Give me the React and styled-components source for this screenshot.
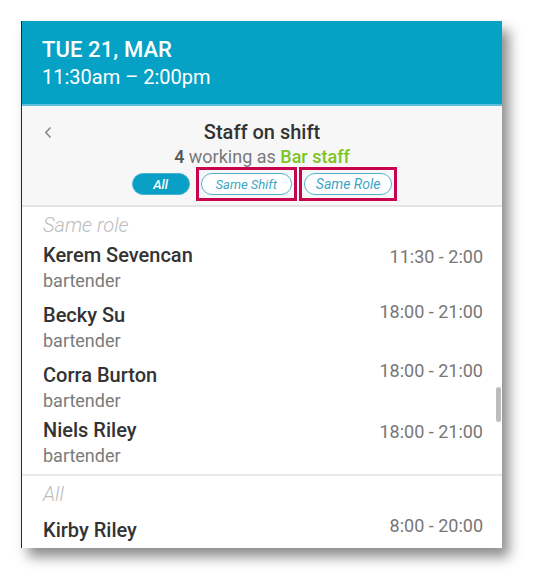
import React from "react";
import styled, { createGlobalStyle } from "styled-components";

const GlobalStyle = createGlobalStyle`
  html, body {
    margin: 0;
    padding: 0;
    background: #ffffff;
    font-family: Roboto, "Liberation Sans", Arial, sans-serif;
  }
`;

const Page = styled.div`
  width: 543px;
  height: 585px;
  padding: 21px 0 0 21px;
  box-sizing: border-box;
  overflow: hidden;
`;

const Card = styled.div`
  position: relative;
  width: 480px;
  height: 527px;
  display: flex;
  flex-direction: column;
  background: #ffffff;
  border-left: 1px solid #2a2a2a;
  box-shadow: 7px 9px 12px rgba(0, 0, 0, 0.45);
  overflow: hidden;
`;

const Header = styled.div`
  flex-shrink: 0;
  height: 85px;
  box-sizing: border-box;
  padding: 16px 0 0 20px;
  background: #05a2c6;
  border-bottom: 2px solid #5cc0da;
  color: #ffffff;
`;

const DateLine = styled.div`
  font-size: 22px;
  line-height: 26px;
  font-weight: 500;
  letter-spacing: 0.1px;
`;

const TimeLine = styled.div`
  font-size: 20px;
  line-height: 24px;
  margin-top: 2px;
`;

const SubHeader = styled.div`
  flex-shrink: 0;
  display: grid;
  grid-template-columns: 40px 1fr 40px;
  padding: 15px 0 4px;
  background: #f7f7f7;
  border-bottom: 2px solid #e4e4e4;
`;

const Back = styled.div`
  padding: 5px 0 0 22px;
  color: #8a8a8a;
  svg {
    display: block;
  }
`;

const Center = styled.div`
  display: flex;
  flex-direction: column;
  align-items: center;
`;

const Title = styled.div`
  font-size: 20px;
  line-height: 22px;
  font-weight: 500;
  color: #333333;
`;

const Subtitle = styled.div`
  margin-top: 4px;
  font-size: 18px;
  line-height: 20px;
  color: #7a7a7a;
  b {
    font-weight: 500;
    color: #555555;
  }
  em {
    font-style: normal;
    font-weight: 500;
    color: #7cc51e;
  }
`;

const Filters = styled.div`
  display: flex;
  align-items: center;
  gap: 2px;
  margin-left: 5px;
`;

const Highlight = styled.div`
  display: flex;
  padding: 3px 2px;
  border: 3px solid #c8044f;
`;

const Pill = styled.div`
  height: 22px;
  box-sizing: border-box;
  display: flex;
  align-items: center;
  justify-content: center;
  padding: 0 ${({ $pad }) => $pad}px;
  border-radius: 12px;
  font-size: ${({ $size }) => $size}px;
  font-style: italic;
  font-weight: ${({ $active }) => ($active ? 500 : 400)};
  border: 1px solid #4fb3cf;
  background: ${({ $active }) => ($active ? "#0a9fc4" : "#ffffff")};
  color: ${({ $active }) => ($active ? "#ffffff" : "#3aa6c6")};
  min-width: ${({ $active }) => ($active ? "58px" : "auto")};
  margin-right: ${({ $active }) => ($active ? "4px" : "0")};
`;

const List = styled.div`
  flex: 1;
  padding: 7px 19px 0 21px;
`;

const SectionLabel = styled.div`
  font-size: 20px;
  line-height: 22px;
  font-style: italic;
  font-weight: 300;
  color: #bdbdbd;
`;

const Person = styled.div`
  padding-top: ${({ $top }) => $top}px;
`;

const NameRow = styled.div`
  display: flex;
  justify-content: space-between;
  align-items: baseline;
`;

const Name = styled.div`
  font-size: 20px;
  line-height: 22px;
  font-weight: 500;
  color: #333333;
`;

const Hours = styled.div`
  font-size: 18px;
  line-height: 20px;
  color: #777777;
  position: relative;
  top: ${({ $shift }) => $shift}px;
`;

const Role = styled.div`
  margin-top: 5px;
  font-size: 18px;
  line-height: 20px;
  color: #7b7b7b;
`;

const Divider = styled.div`
  height: 2px;
  margin: 8px -19px 7px -21px;
  background: #e8e8e8;
`;

const Scrollbar = styled.div`
  position: absolute;
  right: 1px;
  top: 366px;
  width: 5px;
  height: 35px;
  border-radius: 3px;
  background: #bdbdbd;
`;

const sameRole = [
  { name: "Kerem Sevencan", hours: "11:30 - 2:00", top: 8, shift: 1 },
  { name: "Becky Su", hours: "18:00 - 21:00", top: 13, shift: -4 },
  { name: "Corra Burton", hours: "18:00 - 21:00", top: 13, shift: -5 },
  { name: "Niels Riley", hours: "18:00 - 21:00", top: 8, shift: 1 },
];

export default function App() {
  return (
    <>
      <GlobalStyle />
      <Page>
        <Card>
          <Header>
            <DateLine>TUE 21, MAR</DateLine>
            <TimeLine>11:30am – 2:00pm</TimeLine>
          </Header>
          <SubHeader>
            <Back>
              <svg width="8" height="13" viewBox="0 0 8 13">
                <path d="M6.5 1.5 L1.8 6.5 L6.5 11.5" fill="none" stroke="currentColor" strokeWidth="1.6" />
              </svg>
            </Back>
            <Center>
              <Title>Staff on shift</Title>
              <Subtitle>
                <b>4</b> working as <em>Bar staff</em>
              </Subtitle>
              <Filters>
                <Pill $active $size={13} $pad={12}>All</Pill>
                <Highlight>
                  <Pill $size={13} $pad={14}>Same Shift</Pill>
                </Highlight>
                <Highlight>
                  <Pill $size={14} $pad={11}>Same Role</Pill>
                </Highlight>
              </Filters>
            </Center>
            <div />
          </SubHeader>
          <List>
            <SectionLabel>Same role</SectionLabel>
            {sameRole.map((p) => (
              <Person key={p.name} $top={p.top}>
                <NameRow>
                  <Name>{p.name}</Name>
                  <Hours $shift={p.shift}>{p.hours}</Hours>
                </NameRow>
                <Role>bartender</Role>
              </Person>
            ))}
            <Divider />
            <SectionLabel>All</SectionLabel>
            <Person $top={14}>
              <NameRow>
                <Name>Kirby Riley</Name>
                <Hours $shift={-5}>8:00 - 20:00</Hours>
              </NameRow>
            </Person>
          </List>
          <Scrollbar />
        </Card>
      </Page>
    </>
  );
}
